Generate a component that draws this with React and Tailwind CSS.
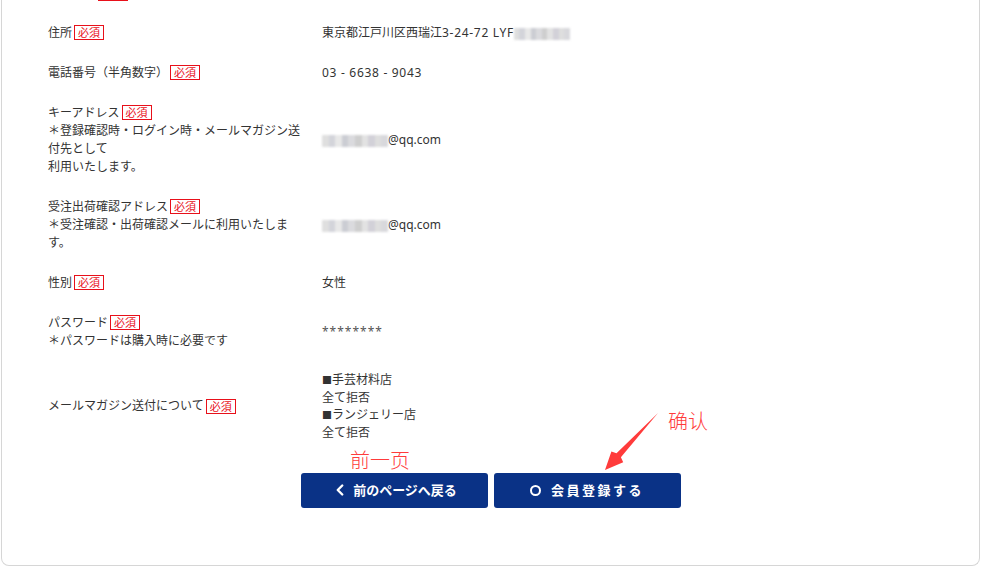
import React from 'react';
import { ChevronLeft } from 'lucide-react';

const Badge = () => (
  <span className="inline-block align-middle ml-[2px] border border-[#e8101a] text-[#e8101a] text-[11px] leading-[13px] px-[3px] -mt-[2px]">
    必須
  </span>
);

const Mosaic = ({ width = 60 }) => (
  <span className="inline-flex align-middle h-[12px] overflow-hidden blur-[1px] opacity-80" style={{ width }}>
    {['#d8d8d8', '#c9cad2', '#e3e3e3', '#bfc1c9', '#d2d2d6', '#c3c3c3', '#dcdcdc', '#c8c6cf', '#d6d6d6', '#cfcfd4'].map((c, i) => (
      <span key={i} className="flex-1 h-full" style={{ backgroundColor: c }} />
    ))}
  </span>
);

const Row = ({ label, note, value, pad = 'py-[11px]' }) => (
  <div className={`flex items-center ${pad}`}>
    <div className="w-[274px] shrink-0 pr-[18px]">
      <div>
        {label}
        <Badge />
      </div>
      {note && <div>{note}</div>}
    </div>
    <div className="flex-1">{value}</div>
  </div>
);

const App = () => {
  return (
    <div className="w-[981px] h-[569px] overflow-hidden bg-white relative" style={{ fontFamily: '"Noto Sans", "Noto Sans CJK JP", sans-serif' }}>
      <div className="mx-[1px] -mt-[27px] h-[593px] border border-t-0 border-[#d6d6d6] rounded-b-[8px] bg-white text-[12px] leading-[18px] text-[#333]">
        <div className="pl-[46px]">
          {/* previous row, scrolled out of view */}
          <div className="flex items-center h-[40px]">
            <span className="w-[50px]" />
            <span className="w-[30px] h-[15px] border border-[#e8101a]" />
          </div>
          <Row
            label="住所"
            value={<span>東京都江戸川区西瑞江<span className="tracking-[0.7px]">3-24-72 LYF</span><Mosaic width={56} /></span>}
          />
          <Row label="電話番号（半角数字）" value={<span className="tracking-[0.7px]">03 - 6638 - 9043</span>} />
          <Row
            label="キーアドレス"
            note={<>＊登録確認時・ログイン時・メールマガジン送付先として<br />利用いたします。</>}
            value={<span><Mosaic width={66} />@qq.com</span>}
          />
          <Row
            label="受注出荷確認アドレス"
            note="＊受注確認・出荷確認メールに利用いたします。"
            value={<span><Mosaic width={66} />@qq.com</span>}
          />
          <Row label="性別" value={<span>女性</span>} />
          <Row
            label="パスワード"
            note="＊パスワードは購入時に必要です"
            value={<span className="tracking-[1px] text-[#555]">********</span>}
          />
          <Row
            pad="py-[10px]"
            label="メールマガジン送付について"
            value={
              <div className="leading-[17.7px]">
                <div><span className="text-[10px] leading-none">■</span>手芸材料店</div>
                <div>全て拒否</div>
                <div><span className="text-[10px] leading-none">■</span>ランジェリー店</div>
                <div>全て拒否</div>
              </div>
            }
          />
        </div>

        <div className="flex justify-center gap-[6px] mt-[21px]">
          <button className="w-[187px] h-[35px] rounded-[3px] bg-[#0a3286] text-white text-[13px] font-bold flex items-center justify-center gap-[4px]">
            <ChevronLeft size={18} strokeWidth={3.2} />
            <span>前のページへ戻る</span>
          </button>
          <button className="w-[187px] h-[35px] rounded-[3px] bg-[#0a3286] text-white text-[13px] font-bold flex items-center justify-center gap-[10px]">
            <span className="w-[11px] h-[11px] rounded-full border-[2px] border-white" />
            <span className="tracking-[2.5px]">会員登録する</span>
          </button>
        </div>
      </div>

      {/* annotations */}
      <span className="absolute left-[350px] top-[448px] text-[20px] leading-[24px] font-light text-[#ff3b3b]" style={{ fontFamily: '"Noto Sans CJK SC", sans-serif' }}>
        前一页
      </span>
      <span className="absolute left-[668px] top-[409px] text-[20px] leading-[24px] font-light text-[#ff3b3b]" style={{ fontFamily: '"Noto Sans CJK SC", sans-serif' }}>
        确认
      </span>
      <svg className="absolute left-0 top-0 pointer-events-none" width="981" height="569">
        <polygon
          points="605,470 611.4,451.4 616.5,453.3 658,413 620.9,457.3 623.2,462.2"
          fill="#ff3b3b"
        />
      </svg>
    </div>
  );
};

export default App;
